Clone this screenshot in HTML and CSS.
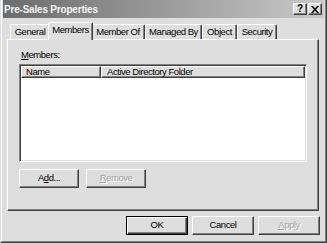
FILE: index.html
```html
<!DOCTYPE html>
<html>
<head>
<meta charset="utf-8">
<link rel="stylesheet" href="styles.css">
</head>
<body>
<div class="window">
  <div class="frame">
    <div class="titlebar">
      <span class="title">Pre-Sales Properties</span>
      <div class="caption-btns">
        <span class="cap-btn help">?</span>
        <span class="cap-btn close"><svg width="8" height="7" viewBox="0 0 8 7"><path d="M0 0h2l2 2.4L6 0h2L5 3.5 8 7H6L4 4.6 2 7H0l3-3.5z"/></svg></span>
      </div>
    </div>
    <div class="content">
      <div class="tabs">
        <div class="tab t-general">General</div>
        <div class="tab t-members active">Members</div>
        <div class="tab t-memberof">Member Of</div>
        <div class="tab t-managed">Managed By</div>
        <div class="tab t-object">Object</div>
        <div class="tab t-security">Security</div>
      </div>
      <div class="panel">
        <div class="label"><u>M</u>embers:</div>
        <div class="listbox">
          <div class="header">
            <div class="col col-name">Name</div>
            <div class="col col-folder">Active Directory Folder</div>
          </div>
        </div>
        <div class="panel-btns">
          <button class="btn">A<u>d</u>d...</button>
          <button class="btn disabled"><u>R</u>emove</button>
        </div>
      </div>
      <div class="dlg-btns">
        <button class="btn wide default">OK</button>
        <button class="btn wide">Cancel</button>
        <button class="btn wide disabled"><u>A</u>pply</button>
      </div>
    </div>
  </div>
</div>
</body>
</html>
```
FILE: styles.css
```css
html, body {
  margin: 0;
  padding: 0;
}
body {
  width: 327px;
  height: 243px;
  overflow: hidden;
  background: #dedede;
  font-family: "Liberation Sans", Arial, sans-serif;
  font-size: 9.5px;
  letter-spacing: -0.45px;
  color: #000;
}
.window {
  box-sizing: border-box;
  width: 327px;
  height: 243px;
  background: #dedede;
  border: 1px solid;
  border-top: 0;
  border-color: #dedede #404040 #404040 #dedede;
}
.frame {
  box-sizing: border-box;
  height: 100%;
  border: 1px solid;
  border-top: 0;
  border-color: #fff #808080 #808080 #fff;
  padding: 0 1px 1px;
  display: flex;
  flex-direction: column;
}
.titlebar {
  height: 18px;
  flex: none;
  display: flex;
  align-items: center;
  justify-content: space-between;
  background: linear-gradient(to right, #6c6c6c, #c9c9c9);
  padding: 0 2px 0 1px;
}
.title {
  font-weight: bold;
  font-size: 10px;
  letter-spacing: -0.2px;
  color: #f4f4f4;
  padding-top: 1px;
}
.caption-btns {
  display: flex;
  gap: 1px;
}
.cap-btn {
  box-sizing: border-box;
  width: 14px;
  height: 12px;
  background: #dedede;
  border: 1px solid;
  border-color: #fff #404040 #404040 #fff;
  box-shadow: inset -1px -1px #808080;
  display: flex;
  align-items: center;
  justify-content: center;
  font-weight: bold;
  font-size: 10px;
  letter-spacing: 0;
  line-height: 10px;
}
.cap-btn svg {
  display: block;
}
.content {
  flex: 1;
  padding: 0 5px 0 4px;
  display: flex;
  flex-direction: column;
}
.tabs {
  height: 21px;
  flex: none;
  display: flex;
  align-items: flex-end;
  padding-left: 3px;
}
.tab {
  box-sizing: border-box;
  height: 15px;
  border: 1px solid;
  border-bottom: 0;
  border-color: #fff #404040 transparent #fff;
  box-shadow: inset -1px 0 #808080;
  border-radius: 2px 2px 0 0;
  text-align: center;
  line-height: 14px;
  white-space: nowrap;
  background: #dedede;
}
.tab.active {
  height: 18px;
  margin: 0 -2px -1px;
  position: relative;
  z-index: 1;
  line-height: 14px;
}
.t-general { width: 40px; }
.t-members { width: 45px; }
.t-memberof { width: 54px; }
.t-managed { width: 57px; }
.t-object { width: 35px; }
.t-security { width: 40px; }
.panel {
  box-sizing: border-box;
  height: 172px;
  flex: none;
  border: 1px solid;
  border-color: #fff #404040 #404040 #fff;
  box-shadow: inset -1px -1px #808080;
  padding: 9px 10px 0 11px;
}
.label {
  line-height: 12px;
  margin-left: 2px;
}
.listbox {
  box-sizing: border-box;
  width: 288px;
  height: 98px;
  margin-top: 3px;
  background: #fff;
  border: 1px solid;
  border-color: #808080 #fff #fff #808080;
  box-shadow: inset 1px 1px #404040, inset -1px -1px #dedede;
  padding: 1px;
}
.header {
  display: flex;
  height: 12px;
}
.col {
  box-sizing: border-box;
  height: 12px;
  border: 1px solid;
  border-color: #fff #404040 #404040 #fff;
  box-shadow: inset -1px -1px #808080;
  background: #dedede;
  line-height: 10px;
  padding-left: 4px;
  white-space: nowrap;
}
.col-name { width: 80px; }
.col-folder { flex: 1; padding-left: 5px; }
.panel-btns {
  display: flex;
  gap: 7px;
  margin-top: 7px;
}
.btn {
  box-sizing: border-box;
  width: 60px;
  height: 19px;
  padding: 0 0 2px;
  margin: 0;
  font: inherit;
  letter-spacing: inherit;
  line-height: 12px;
  color: #000;
  background: #dedede;
  border: 1px solid;
  border-color: #fff #404040 #404040 #fff;
  box-shadow: inset -1px -1px #808080;
  display: flex;
  align-items: center;
  justify-content: center;
}
.btn.wide {
  width: 62px;
}
.btn.default {
  border-color: #000;
  box-shadow: inset 1px 1px #fff, inset -1px -1px #404040, inset -2px -2px #808080;
}
.btn.disabled {
  color: #a3a3a3;
  text-shadow: 1px 1px #fff;
}
.dlg-btns {
  display: flex;
  justify-content: flex-end;
  gap: 4px;
  margin-top: 5px;
  margin-right: -1px;
}
```
